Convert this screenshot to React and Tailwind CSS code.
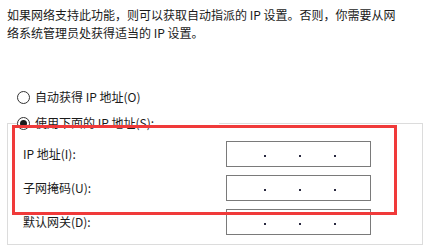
import React from 'react';

const font = { fontFamily: '"Noto Sans CJK SC", "Noto Sans", sans-serif' };

function Radio({ checked }) {
  return (
    <span className="flex h-[13px] w-[13px] shrink-0 items-center justify-center rounded-full border border-[#333333] bg-white">
      {checked && <span className="h-[7px] w-[7px] rounded-full bg-[#1a1a1a]" />}
    </span>
  );
}

function IpInput() {
  return (
    <div className="flex h-[26px] w-[145px] items-center gap-[33px] border border-[#7a7a7a] bg-white pl-[37px] pt-[3px]">
      <span className="h-[2px] w-[2px] bg-[#2a2a40]" />
      <span className="h-[2px] w-[2px] bg-[#2a2a40]" />
      <span className="h-[2px] w-[2px] bg-[#2a2a40]" />
    </div>
  );
}

function Row({ label }) {
  return (
    <div className="flex h-[26px] items-center">
      <span className="w-[203px]">{label}</span>
      <IpInput />
    </div>
  );
}

export default function App() {
  return (
    <div className="relative h-[252px] w-[430px] overflow-hidden bg-white text-[12px] leading-[18px] text-[#1a1a1a]" style={font}>
      <p className="pl-[7px] pt-[6px]">
        如果网络支持此功能，则可以获取自动指派的 IP 设置。否则，你需要从网
        <br />
        络系统管理员处获得适当的 IP 设置。
      </p>

      <div className="ml-[17px] mt-[46px] flex h-[18px] items-center gap-[5px]">
        <Radio />
        <span>自动获得 IP 地址(O)</span>
      </div>

      <fieldset className="ml-[7px] mt-[8px] w-[416px] border border-[#dcdcdc] pb-[9px]">
        <legend className="ml-[9px] flex h-[18px] w-[202px] items-center gap-[5px] bg-white">
          <Radio checked />
          <span>使用下面的 IP 地址(S):</span>
        </legend>
        <div className="flex flex-col gap-[8px] pl-[15px] pt-[9px]">
          <Row label="IP 地址(I):" />
          <Row label="子网掩码(U):" />
          <Row label="默认网关(D):" />
        </div>
      </fieldset>

      {/* red highlight drawn over the screenshot */}
      <div className="pointer-events-none absolute left-[12px] top-[125px] h-[90px] w-[385px] border-[3px] border-[#f03a3a]" />
    </div>
  );
}
